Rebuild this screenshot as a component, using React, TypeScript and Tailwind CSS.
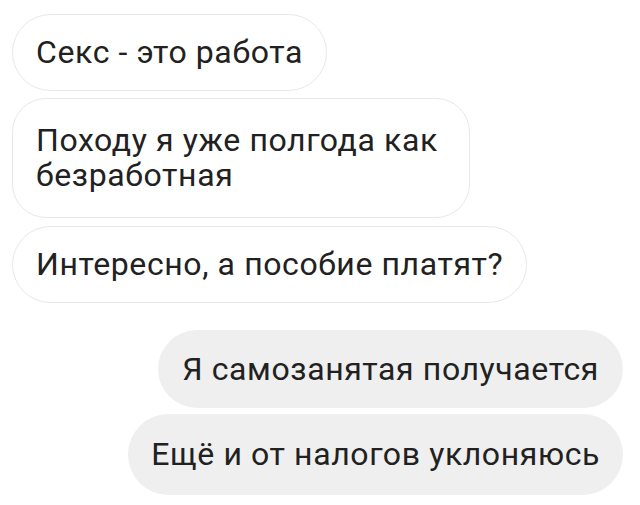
import React from "react";

export default function App() {
  const font = { fontFamily: "Roboto, 'Noto Sans', sans-serif" };
  return (
    <div
      className="w-[640px] h-[505px] bg-white flex flex-col pt-[14px] pl-[12px] pr-[17px] text-[32px] leading-[35px] tracking-[0.6px] text-[#212121] overflow-hidden whitespace-nowrap"
      style={font}
    >
      <div className="self-start rounded-full border border-[#e8e8e8] bg-white px-[23px] py-[20px]">
        Секс - это работа
      </div>
      <div className="self-start mt-[7px] w-[458px] rounded-[34px] border border-[#e8e8e8] bg-white px-[23px] py-[24px]">
        Походу я уже полгода как
        <br />
        безработная
      </div>
      <div className="self-start mt-[8px] rounded-full border border-[#e8e8e8] bg-white px-[23px] py-[20px]">
        Интересно, а пособие платят?
      </div>
      <div className="self-end mt-[27px] rounded-full bg-[#efefef] px-[24px] py-[21.5px]">
        Я самозанятая получается
      </div>
      <div className="self-end mt-[6px] rounded-full bg-[#efefef] px-[23px] py-[23px]">
        Ещё и от налогов уклоняюсь
      </div>
    </div>
  );
}
